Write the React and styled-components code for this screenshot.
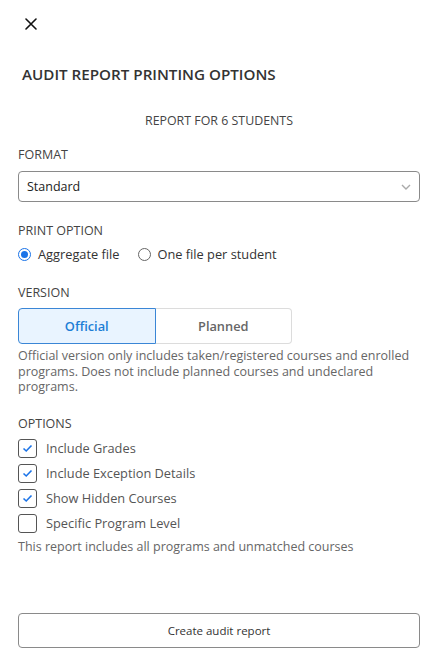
import React, { useState } from 'react';
import styled, { createGlobalStyle } from 'styled-components';

const GlobalStyle = createGlobalStyle`
    body {
        margin: 0;
        background: #fff;
        font-family: "Open Sans", "Noto Sans", sans-serif;
        color: #333;
    }
`;

const Panel = styled.div`
    width: 438px;
    height: 662px;
    box-sizing: border-box;
    padding: 0 18px;
    display: flex;
    flex-direction: column;
`;

const CloseButton = styled.button`
    align-self: flex-start;
    margin: 14px 0 0 3px;
    padding: 0;
    width: 20px;
    height: 20px;
    border: none;
    background: none;
    display: flex;
    align-items: center;
    justify-content: center;
    cursor: pointer;
`;

const Title = styled.h2`
    margin: 30px 0 0 4px;
    font-size: 15.2px;
    font-weight: 600;
    line-height: 20px;
    color: #333;
`;

const Subtitle = styled.div`
    margin-top: 29px;
    text-align: center;
    font-size: 12.4px;
    line-height: 16px;
    color: #444;
`;

const Label = styled.div`
    margin-top: ${p => p.top || 16}px;
    font-size: 12.5px;
    line-height: 16px;
    color: #444;
`;

const SelectBox = styled.div`
    margin-top: 8px;
    height: 31px;
    box-sizing: border-box;
    border: 1px solid #8a8a8a;
    border-radius: 4px;
    display: flex;
    align-items: center;
    justify-content: space-between;
    padding: 0 8px 0 8px;
    font-size: 12.5px;
    color: #222;
`;

const RadioRow = styled.div`
    margin-top: 6px;
    display: flex;
    gap: 18px;
    align-items: center;
`;

const RadioLabel = styled.label`
    display: flex;
    align-items: center;
    gap: 7px;
    font-size: 12.8px;
    color: #333;
    cursor: pointer;
`;

const RadioCircle = styled.span`
    width: 11px;
    height: 11px;
    border-radius: 50%;
    border: 1px solid ${p => p.checked ? '#1a73e8' : '#666'};
    display: flex;
    align-items: center;
    justify-content: center;
    &::after {
        content: '';
        width: 7px;
        height: 7px;
        border-radius: 50%;
        background: ${p => p.checked ? '#1a73e8' : 'transparent'};
    }
`;

const Segmented = styled.div`
    margin-top: 7px;
    display: flex;
    width: 274px;
    height: 36px;
`;

const Segment = styled.button`
    flex: 1;
    box-sizing: border-box;
    font-family: inherit;
    font-size: 12.8px;
    font-weight: 600;
    cursor: pointer;
    color: ${p => p.active ? '#1c7ed6' : '#666'};
    background: ${p => p.active ? '#e9f4ff' : '#fff'};
    border: 1px solid ${p => p.active ? '#3a86d6' : '#dcdcdc'};
    border-radius: ${p => p.first ? '4px 0 0 4px' : '0 4px 4px 0'};
    ${p => !p.first && 'border-left: none;'}
`;

const Help = styled.p`
    margin: ${p => p.top || 4}px 0 0;
    font-size: 12.5px;
    line-height: 15.5px;
    color: #666;
`;

const CheckList = styled.div`
    margin-top: 7px;
    display: flex;
    flex-direction: column;
    gap: 6px;
`;

const CheckRow = styled.label`
    display: flex;
    align-items: center;
    gap: 9px;
    font-size: 12.8px;
    color: #555;
    cursor: pointer;
`;

const CheckBox = styled.span`
    width: 19px;
    height: 19px;
    box-sizing: border-box;
    border: 1px solid #555;
    border-radius: 3px;
    display: flex;
    align-items: center;
    justify-content: center;
`;

const Spacer = styled.div`
    flex: 1;
`;

const PrimaryButton = styled.button`
    margin-bottom: 14px;
    height: 35px;
    font-family: inherit;
    font-size: 11.5px;
    color: #333;
    background: #fff;
    border: 1px solid #8a8a8a;
    border-radius: 4px;
    cursor: pointer;
`;

const options = [
    { label: 'Include Grades', checked: true },
    { label: 'Include Exception Details', checked: true },
    { label: 'Show Hidden Courses', checked: true },
    { label: 'Specific Program Level', checked: false },
];

const App = () => {
    const [printOption, setPrintOption] = useState('aggregate');
    const [version, setVersion] = useState('official');
    const [checks, setChecks] = useState(options.map(o => o.checked));

    return <>
        <GlobalStyle />
        <Panel>
            <CloseButton aria-label="Close">
                <svg width="12" height="12" viewBox="0 0 12 12">
                    <path d="M1 1 L11 11 M11 1 L1 11" stroke="#111" strokeWidth="1.6" strokeLinecap="round" />
                </svg>
            </CloseButton>
            <Title>AUDIT REPORT PRINTING OPTIONS</Title>
            <Subtitle>REPORT FOR 6 STUDENTS</Subtitle>

            <Label top={18}>FORMAT</Label>
            <SelectBox>
                <span>Standard</span>
                <svg width="10" height="6" viewBox="0 0 10 6">
                    <path d="M1 1 L5 5 L9 1" stroke="#aaa" strokeWidth="1.4" fill="none" />
                </svg>
            </SelectBox>

            <Label top={21}>PRINT OPTION</Label>
            <RadioRow>
                <RadioLabel onClick={() => setPrintOption('aggregate')}>
                    <RadioCircle checked={printOption === 'aggregate'} />
                    Aggregate file
                </RadioLabel>
                <RadioLabel onClick={() => setPrintOption('single')}>
                    <RadioCircle checked={printOption === 'single'} />
                    One file per student
                </RadioLabel>
            </RadioRow>

            <Label top={22}>VERSION</Label>
            <Segmented>
                <Segment first active={version === 'official'} onClick={() => setVersion('official')}>Official</Segment>
                <Segment active={version === 'planned'} onClick={() => setVersion('planned')}>Planned</Segment>
            </Segmented>
            <Help>
                Official version only includes taken/registered courses and enrolled programs. Does not include planned courses and undeclared programs.
            </Help>

            <Label top={21}>OPTIONS</Label>
            <CheckList>
                {options.map((o, i) => (
                    <CheckRow key={o.label} onClick={() => setChecks(c => c.map((v, j) => j === i ? !v : v))}>
                        <CheckBox>
                            {checks[i] &&
                                <svg width="11" height="9" viewBox="0 0 11 9">
                                    <path d="M1.5 4.5 L4.2 7 L9.5 1.5" stroke="#1a73e8" strokeWidth="1.6" fill="none" />
                                </svg>
                            }
                        </CheckBox>
                        {o.label}
                    </CheckRow>
                ))}
            </CheckList>
            <Help top={6}>This report includes all programs and unmatched courses</Help>

            <Spacer />
            <PrimaryButton>Create audit report</PrimaryButton>
        </Panel>
    </>
};

export default App;
